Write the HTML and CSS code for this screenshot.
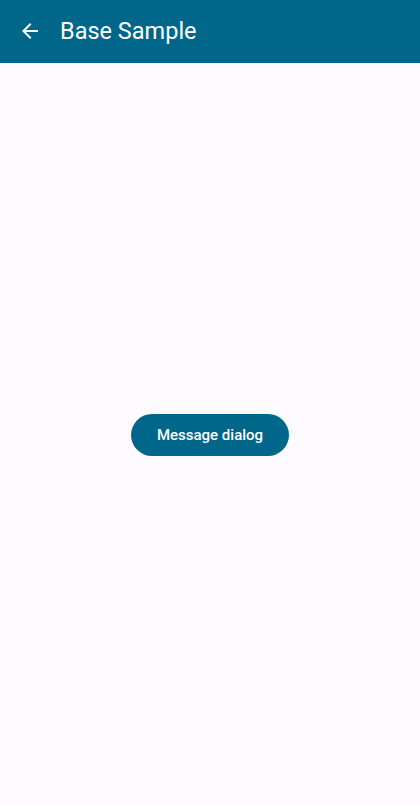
FILE: index.html
```html
<!DOCTYPE html>
<html>
<head>
<meta charset="utf-8">
<link rel="stylesheet" href="styles.css">
</head>
<body>
<div class="app">
  <header class="topbar">
    <div class="back">
      <svg width="24" height="24" viewBox="0 0 24 24"><path d="M20 11H7.83l5.59-5.59L12 4l-8 8 8 8 1.41-1.41L7.83 13H20v-2z" fill="#ffffff"/></svg>
    </div>
    <h1 class="title">Base Sample</h1>
  </header>
  <main class="content">
    <button class="btn">Message dialog</button>
  </main>
</div>
</body>
</html>
```
FILE: styles.css
```css
html, body {
  margin: 0;
  padding: 0;
  height: 100%;
}
body {
  background: #fdfbff;
  font-family: Roboto, "Noto Sans", sans-serif;
}
.app {
  display: flex;
  flex-direction: column;
  height: 805px;
}
.topbar {
  height: 63px;
  background: #00668a;
  display: flex;
  align-items: center;
  flex-shrink: 0;
}
.back {
  width: 24px;
  height: 24px;
  margin-left: 18px;
  margin-top: -2px;
}
.title {
  margin: 0 0 0 18px;
  color: #ffffff;
  font-size: 23.5px;
  font-weight: 400;
  margin-top: -2px;
}
.content {
  flex: 1;
  display: flex;
  justify-content: center;
  align-items: flex-start;
  padding-top: 351px;
}
.btn {
  width: 158px;
  height: 42px;
  border: none;
  border-radius: 21px;
  background: #00668a;
  color: #ffffff;
  font-family: Roboto, sans-serif;
  font-size: 15px;
  font-weight: 500;
  padding: 0;
}
```
